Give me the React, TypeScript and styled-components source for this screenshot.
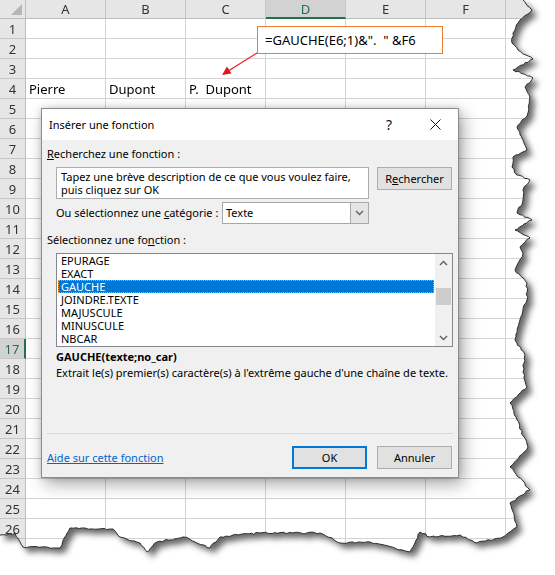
import React from "react";
import styled, { createGlobalStyle } from "styled-components";

const GlobalStyle = createGlobalStyle`
  *, *::before, *::after { box-sizing: border-box; }
  html, body { margin: 0; padding: 0; background: #fff; }
  body { font-family: "Noto Sans", "Open Sans", sans-serif; }
`;

const COLS = ["A", "B", "C", "D", "E", "F", "G"];
const ROWS = Array.from({ length: 27 }, (_, i) => i + 1);
const CELLS: Record<string, string> = {
  A4: "Pierre",
  B4: "Dupont",
  C4: "P.  Dupont",
};
const FUNCTIONS = ["EPURAGE", "EXACT", "GAUCHE", "JOINDRE.TEXTE", "MAJUSCULE", "MINUSCULE", "NBCAR"];

// torn paper edge: right side top->bottom, then bottom right->left
const EDGE_KEYS: [number, number][] = [
  [523, 0], [532, 10], [520, 20], [513, 33], [512, 43], [518, 50], [533, 59], [513, 70],
  [533, 78], [525, 87], [530, 97], [528, 113], [517, 127], [523, 140], [527, 150], [513, 157],
  [512, 167], [517, 175], [530, 180], [523, 190], [523, 200], [517, 213], [532, 220], [515, 230],
  [530, 238], [520, 247], [523, 253], [515, 270], [527, 283], [527, 300], [520, 320], [515, 340],
  [525, 355], [523, 372], [527, 387], [510, 403], [517, 420], [528, 447], [510, 467], [530, 490],
  [510, 503], [517, 527], [503, 537],
  [477, 543], [460, 535], [430, 537], [420, 532], [410, 552], [370, 542], [340, 543], [320, 533],
  [260, 533], [233, 535], [220, 537], [210, 548], [197, 543], [183, 537], [157, 542], [147, 552],
  [140, 543], [120, 537], [113, 529], [70, 528], [60, 548], [23, 547], [15, 533], [7, 535], [0, 535],
];

function roughen(points: [number, number][]) {
  let seed = 11;
  const rnd = () => {
    seed = (seed * 9301 + 49297) % 233280;
    return seed / 233280 - 0.5;
  };
  const out: [number, number][] = [];
  for (let i = 0; i < points.length - 1; i++) {
    const [x1, y1] = points[i];
    const [x2, y2] = points[i + 1];
    const n = Math.max(1, Math.round(Math.hypot(x2 - x1, y2 - y1) / 3));
    for (let k = 0; k < n; k++) {
      const t = k / n;
      const j = k === 0 ? 0 : 1.8;
      out.push([x1 + (x2 - x1) * t + rnd() * j, y1 + (y2 - y1) * t + rnd() * j]);
    }
  }
  out.push(points[points.length - 1]);
  return out;
}

const EDGE = roughen(EDGE_KEYS);
const CLIP = ["0px 0px", ...EDGE.map(([x, y]) => `${x.toFixed(1)}px ${y.toFixed(1)}px`)].join(", ");
const EDGE_PATH = EDGE.map(([x, y]) => `${x.toFixed(1)},${y.toFixed(1)}`).join(" ");

const Page = styled.div`
  position: relative;
  width: 555px;
  height: 575px;
  overflow: hidden;
  background: #fff;
`;

const Torn = styled.div`
  filter: drop-shadow(5px 5px 3px rgba(0, 0, 0, 0.6));
`;

const Sheet = styled.div<{ $clip: string }>`
  display: grid;
  grid-template-columns: 26px repeat(7, 80px);
  grid-template-rows: 19px repeat(27, 20px);
  width: 586px;
  background: #fff;
  clip-path: polygon(${(p) => p.$clip});
  font-family: "Noto Sans", "Open Sans", sans-serif;
  font-size: 13px;
  color: #000;
`;

const Corner = styled.div`
  position: relative;
  background: #e6e6e6;
  border-right: 1px solid #bdbdbd;
  border-bottom: 1px solid #bdbdbd;
  &::after {
    content: "";
    position: absolute;
    right: 3px;
    bottom: 3px;
    width: 11px;
    height: 11px;
    background: #b5b5b5;
    clip-path: polygon(100% 0, 100% 100%, 0 100%);
  }
`;

const ColHead = styled.div<{ $active?: boolean }>`
  display: flex;
  align-items: center;
  justify-content: center;
  background: ${(p) => (p.$active ? "#d2d2d2" : "#e6e6e6")};
  color: ${(p) => (p.$active ? "#217346" : "#333")};
  border-right: 1px solid #c6c6c6;
  border-bottom: ${(p) => (p.$active ? "2px solid #217346" : "1px solid #bdbdbd")};
  font-size: 13px;
`;

const RowHead = styled.div<{ $active?: boolean }>`
  display: flex;
  align-items: center;
  justify-content: center;
  background: ${(p) => (p.$active ? "#d2d2d2" : "#e6e6e6")};
  color: ${(p) => (p.$active ? "#217346" : "#333")};
  border-right: ${(p) => (p.$active ? "2px solid #217346" : "1px solid #bdbdbd")};
  border-bottom: 1px solid #c6c6c6;
  font-size: 13px;
`;

const Cell = styled.div`
  display: flex;
  align-items: center;
  padding-left: 3px;
  border-right: 1px solid #d4d4d4;
  border-bottom: 1px solid #d4d4d4;
  white-space: pre;
`;

const Overlay = styled.svg`
  position: absolute;
  left: 0;
  top: 0;
  pointer-events: none;
`;

const Callout = styled.div`
  position: absolute;
  left: 257px;
  top: 26px;
  width: 186px;
  height: 28px;
  display: flex;
  align-items: center;
  padding-left: 7px;
  background: #fff;
  border: 1px solid #ed7d31;
  font-family: "Noto Sans", "Open Sans", sans-serif;
  font-size: 13px;
  white-space: pre;
`;

const Dialog = styled.div`
  position: absolute;
  left: 41px;
  top: 108px;
  width: 418px;
  height: 370px;
  display: flex;
  flex-direction: column;
  background: #f0f0f0;
  border: 1px solid #8c8c8c;
  box-shadow: 4px 6px 16px rgba(0, 0, 0, 0.35), 0 0 6px rgba(0, 0, 0, 0.15);
  font-family: "Noto Sans", "Open Sans", sans-serif;
  font-size: 11px;
  color: #000;
`;

const TitleBar = styled.div`
  display: flex;
  align-items: center;
  height: 31px;
  padding-left: 7px;
  background: #fff;
`;

const Title = styled.div`
  flex: 1;
  font-size: 11px;
`;

const TitleButton = styled.div`
  width: 46px;
  height: 31px;
  display: flex;
  align-items: center;
  justify-content: center;
  font-size: 14px;
  color: #111;
`;

const Body = styled.div`
  flex: 1;
  display: flex;
  flex-direction: column;
  padding: 0 5px 8px;
`;

const Label = styled.div<{ $top: number }>`
  margin-top: ${(p) => p.$top}px;
  line-height: 16px;
  white-space: nowrap;
`;

const Indent = styled.div<{ $top: number }>`
  display: flex;
  align-items: flex-start;
  margin-top: ${(p) => p.$top}px;
  padding-left: 9px;
`;

const SearchBox = styled.div`
  width: 313px;
  height: 32px;
  padding: 2px 4px;
  background: #fff;
  border: 1px solid #adadad;
  line-height: 13px;
  white-space: nowrap;
`;

const Button = styled.div<{ $primary?: boolean }>`
  width: 75px;
  height: 23px;
  display: flex;
  align-items: center;
  justify-content: center;
  background: #e1e1e1;
  border: ${(p) => (p.$primary ? "2px solid #0078d7" : "1px solid #adadad")};
`;

const SearchButton = styled(Button)`
  margin-left: 8px;
`;

const CategoryLabel = styled.div`
  width: 166px;
  line-height: 22px;
  white-space: nowrap;
`;

const Select = styled.div`
  width: 147px;
  height: 22px;
  display: flex;
  background: #fff;
  border: 1px solid #a8a8a8;
`;

const SelectValue = styled.div`
  flex: 1;
  padding-left: 3px;
  line-height: 20px;
`;

const SelectArrow = styled.div`
  width: 18px;
  display: flex;
  align-items: center;
  justify-content: center;
  background: #e5e5e5;
  border-left: 1px solid #a8a8a8;
`;

const ListBox = styled.div`
  display: flex;
  width: 397px;
  height: 94px;
  margin-left: 9px;
  margin-top: 5px;
  background: #fff;
  border: 1px solid #828790;
`;

const Items = styled.div`
  flex: 1;
`;

const Item = styled.div<{ $selected?: boolean }>`
  height: 13px;
  margin: 0 1px;
  padding-left: 3px;
  line-height: 13px;
  background: ${(p) => (p.$selected ? "#0078d7" : "transparent")};
  color: ${(p) => (p.$selected ? "#fff" : "#000")};
  outline: ${(p) => (p.$selected ? "1px dotted #ff9c3a" : "none")};
  outline-offset: -1px;
`;

const ScrollBar = styled.div`
  width: 17px;
  display: flex;
  flex-direction: column;
  background: #f0f0f0;
`;

const ScrollArrow = styled.div`
  height: 17px;
  display: flex;
  align-items: center;
  justify-content: center;
`;

const ScrollTrack = styled.div`
  flex: 1;
  padding: 17px 1px 0;
`;

const Thumb = styled.div`
  height: 17px;
  background: #cdcdcd;
`;

const Syntax = styled.div`
  margin-top: 2px;
  padding-left: 9px;
  line-height: 16px;
  font-weight: 700;
`;

const Description = styled.div`
  padding-left: 9px;
  line-height: 16px;
  white-space: nowrap;
`;

const Footer = styled.div`
  margin-top: auto;
  border-top: 1px solid #d9d9d9;
  padding-top: 12px;
  display: flex;
  align-items: center;
`;

const HelpLink = styled.a`
  flex: 1;
  color: #0066cc;
  text-decoration: underline;
`;

const Buttons = styled.div`
  display: flex;
  gap: 10px;
  margin-right: 1px;
`;

const Chevron = ({ up }: { up?: boolean }) => (
  <svg width="9" height="6" viewBox="0 0 9 6">
    <path
      d={up ? "M1 5 L4.5 1.5 L8 5" : "M1 1 L4.5 4.5 L8 1"}
      fill="none"
      stroke="#606060"
      strokeWidth="1.4"
    />
  </svg>
);

export default function App() {
  return (
    <Page>
      <GlobalStyle />
      <Torn>
        <Sheet $clip={CLIP}>
          <Corner />
          {COLS.map((c) => (
            <ColHead key={c} $active={c === "D"}>
              {c}
            </ColHead>
          ))}
          {ROWS.map((r) => (
            <React.Fragment key={r}>
              <RowHead $active={r === 17}>{r}</RowHead>
              {COLS.map((c) => (
                <Cell key={c}>{CELLS[c + r]}</Cell>
              ))}
            </React.Fragment>
          ))}
        </Sheet>
      </Torn>
      <Overlay width="555" height="575">
        <polyline points={EDGE_PATH} fill="none" stroke="#2e2e2e" strokeWidth="1" />
      </Overlay>

      <Callout>{'=GAUCHE(E6;1)&".  " &F6'}</Callout>
      <Overlay width="555" height="575">
        <line x1="257" y1="53" x2="229" y2="70.5" stroke="#e8141b" strokeWidth="1.2" />
        <polygon points="222,75 227,66.5 231.5,73.5" fill="#e8141b" />
      </Overlay>

      <Dialog>
        <TitleBar>
          <Title>Insérer une fonction</Title>
          <TitleButton>?</TitleButton>
          <TitleButton>
            <svg width="11" height="11" viewBox="0 0 11 11">
              <path d="M0.5 0.5 L10.5 10.5 M10.5 0.5 L0.5 10.5" stroke="#111" strokeWidth="1" />
            </svg>
          </TitleButton>
        </TitleBar>
        <Body>
          <Label $top={6}>
            <u>R</u>echerchez une fonction :
          </Label>
          <Indent $top={5}>
            <SearchBox>
              Tapez une brève description de ce que vous voulez faire,
              <br />
              puis cliquez sur OK
            </SearchBox>
            <SearchButton>
              R<u>e</u>chercher
            </SearchButton>
          </Indent>
          <Indent $top={3}>
            <CategoryLabel>
              Ou sélectionnez une <u>c</u>atégorie :
            </CategoryLabel>
            <Select>
              <SelectValue>Texte</SelectValue>
              <SelectArrow>
                <Chevron />
              </SelectArrow>
            </Select>
          </Indent>
          <Label $top={8}>
            Sélectionnez une fo<u>n</u>ction :
          </Label>
          <ListBox>
            <Items>
              {FUNCTIONS.map((f) => (
                <Item key={f} $selected={f === "GAUCHE"}>
                  {f}
                </Item>
              ))}
            </Items>
            <ScrollBar>
              <ScrollArrow>
                <Chevron up />
              </ScrollArrow>
              <ScrollTrack>
                <Thumb />
              </ScrollTrack>
              <ScrollArrow>
                <Chevron />
              </ScrollArrow>
            </ScrollBar>
          </ListBox>
          <Syntax>GAUCHE(texte;no_car)</Syntax>
          <Description>
            Extrait le(s) premier(s) caractère(s) à l'extrême gauche d'une chaîne de texte.
          </Description>
          <Footer>
            <HelpLink>Aide sur cette fonction</HelpLink>
            <Buttons>
              <Button $primary>OK</Button>
              <Button>Annuler</Button>
            </Buttons>
          </Footer>
        </Body>
      </Dialog>
    </Page>
  );
}
